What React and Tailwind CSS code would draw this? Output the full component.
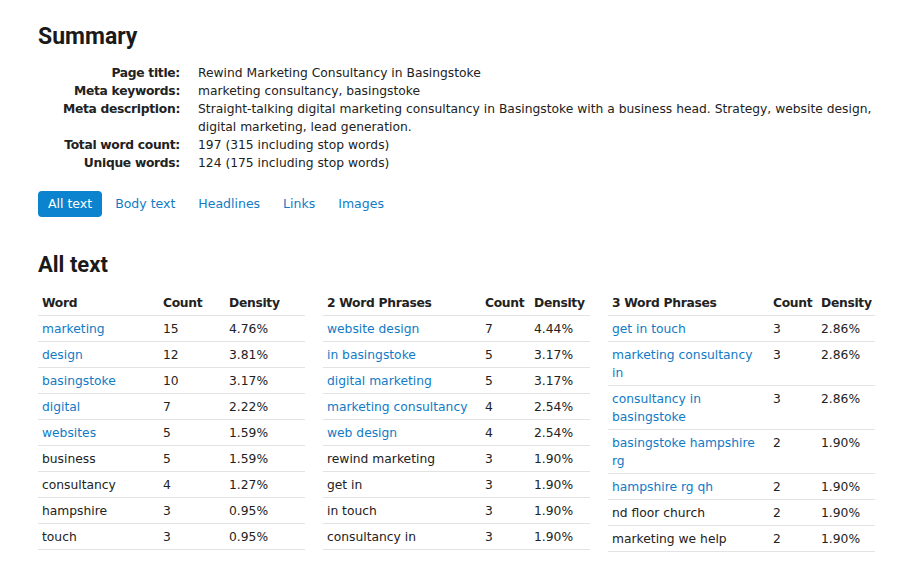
const summary = [
  ['Page title:', 'Rewind Marketing Consultancy in Basingstoke'],
  ['Meta keywords:', 'marketing consultancy, basingstoke'],
  [
    'Meta description:',
    'Straight-talking digital marketing consultancy in Basingstoke with a business head. Strategy, website design, digital marketing, lead generation.',
  ],
  ['Total word count:', '197 (315 including stop words)'],
  ['Unique words:', '124 (175 including stop words)'],
];

const tabs = ['All text', 'Body text', 'Headlines', 'Links', 'Images'];

const tables = [
  {
    title: 'Word',
    cols: ['w-[121px]', 'w-[66px]', ''],
    rows: [
      ['marketing', 15, '4.76%', true],
      ['design', 12, '3.81%', true],
      ['basingstoke', 10, '3.17%', true],
      ['digital', 7, '2.22%', true],
      ['websites', 5, '1.59%', true],
      ['business', 5, '1.59%'],
      ['consultancy', 4, '1.27%'],
      ['hampshire', 3, '0.95%'],
      ['touch', 3, '0.95%'],
    ],
  },
  {
    title: '2 Word Phrases',
    cols: ['w-[158px]', 'w-[49px]', ''],
    rows: [
      ['website design', 7, '4.44%', true],
      ['in basingstoke', 5, '3.17%', true],
      ['digital marketing', 5, '3.17%', true],
      ['marketing consultancy', 4, '2.54%', true],
      ['web design', 4, '2.54%', true],
      ['rewind marketing', 3, '1.90%'],
      ['get in', 3, '1.90%'],
      ['in touch', 3, '1.90%'],
      ['consultancy in', 3, '1.90%'],
    ],
  },
  {
    title: '3 Word Phrases',
    cols: ['w-[161px]', 'w-[48px]', ''],
    rows: [
      ['get in touch', 3, '2.86%', true],
      ['marketing consultancy in', 3, '2.86%', true],
      ['consultancy in basingstoke', 3, '2.86%', true],
      ['basingstoke hampshire rg', 2, '1.90%', true],
      ['hampshire rg qh', 2, '1.90%', true],
      ['nd floor church', 2, '1.90%'],
      ['marketing we help', 2, '1.90%'],
    ],
  },
];

function DensityTable({ table }) {
  return (
    <table className="w-[267px] shrink-0 table-fixed border-collapse text-left">
      <thead>
        <tr className="border-b border-[#e3e3e3] tracking-[-0.3px]">
          <th className={`${table.cols[0]} pl-1 pr-2 pt-[4px] pb-[3px] font-bold`}>{table.title}</th>
          <th className={`${table.cols[1]} pl-1 pt-[4px] pb-[3px] font-bold`}>Count</th>
          <th className="pl-1 pt-[4px] pb-[3px] font-bold">Density</th>
        </tr>
      </thead>
      <tbody>
        {table.rows.map(([text, count, density, link]) => (
          <tr key={text} className="border-b border-[#e3e3e3] align-top">
            <td className="pl-1 pr-2 pt-[4px] pb-[3px]">
              {link ? <a className="text-[#117bc6]">{text}</a> : text}
            </td>
            <td className="pl-1 pt-[4px] pb-[3px]">{count}</td>
            <td className="pl-1 pt-[4px] pb-[3px]">{density}</td>
          </tr>
        ))}
      </tbody>
    </table>
  );
}

export default function App() {
  return (
    <div className="min-h-[573px] bg-white pl-[38px] pr-[20px] pt-[22px] font-['DejaVu_Sans',sans-serif] text-[12.3px] leading-[18px] text-[#222]">
      <h2 className="font-['Roboto',sans-serif] text-[23px] font-bold leading-[30px] text-[#1a1a1a]">Summary</h2>

      <dl className="mt-[12px] grid grid-cols-[142px_1fr] gap-x-[18px]">
        {summary.map(([label, value]) => (
          <div key={label} className="contents">
            <dt className="text-right font-bold tracking-[-0.3px]">{label}</dt>
            <dd>{value}</dd>
          </div>
        ))}
      </dl>

      <nav className="mt-[19px] flex items-center">
        {tabs.map((tab, i) => (
          <a
            key={tab}
            className={
              i === 0
                ? 'rounded-[4px] bg-[#0b83ce] px-[10px] py-[4px] text-[12.5px] text-white'
                : 'ml-[3px] px-[10px] py-[4px] text-[12.5px] text-[#117bc6]'
            }
          >
            {tab}
          </a>
        ))}
      </nav>

      <h2 className="mt-[33px] font-['Roboto',sans-serif] text-[22px] font-bold leading-[30px] text-[#1a1a1a]">All text</h2>

      <div className="mt-[10px] flex items-start gap-[18px]">
        {tables.map((t) => (
          <DensityTable key={t.title} table={t} />
        ))}
      </div>
    </div>
  );
}
